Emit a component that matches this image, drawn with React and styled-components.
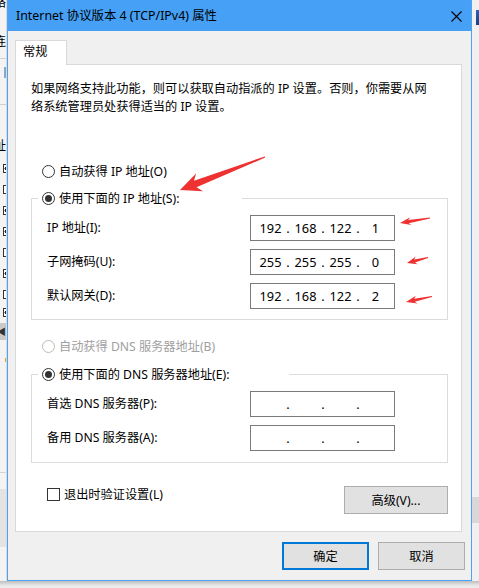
import React from "react";
import styled, { createGlobalStyle } from "styled-components";

const GlobalStyle = createGlobalStyle`
  html, body {
    margin: 0;
    padding: 0;
    background: #f0f0f0;
  }
  body {
    font-family: "Noto Sans", "Noto Sans CJK SC", sans-serif;
    font-size: 12.2px;
    color: #000;
  }
`;

const Page = styled.div`
  position: relative;
  width: 479px;
  height: 588px;
  overflow: hidden;
  display: flex;
  flex-direction: column;
  background: #f0f0f0;
`;

const Stage = styled.div`
  display: flex;
  height: 581px;
`;

/* ---------- background window peeking out at the edges ---------- */
const LeftStrip = styled.div`
  width: 7px;
  box-sizing: border-box;
  border-right: 1px solid #dadada;
  background: #f3f3f3;
  display: flex;
  flex-direction: column;
  overflow: hidden;
`;

const Peek = styled.div`
  height: ${(p) => p.$h}px;
  margin-top: ${(p) => p.$mt || 0}px;
  display: flex;
  justify-content: flex-end;
  align-items: ${(p) => p.$align || "center"};
  overflow: hidden;
  line-height: 14px;
  font-size: 12px;
  white-space: nowrap;
`;

const Rule = styled.div`
  height: 1px;
  margin-top: ${(p) => p.$mt || 0}px;
  background: ${(p) => p.$color || "#cfcfcf"};
`;

const Stub = styled.div`
  width: 4px;
  height: 9px;
  margin: ${(p) => p.$mt}px 0 0 3px;
  box-sizing: border-box;
  border: 1px solid #333;
  border-right: none;
  background: ${(p) => (p.$dot ? "radial-gradient(circle at 75% 50%, #222 1.5px, #fff 2px)" : "#fff")};
`;

const Band = styled.div`
  height: ${(p) => p.$h}px;
  margin-top: ${(p) => p.$mt || 0}px;
  background: ${(p) => p.$color};
  display: flex;
  align-items: center;
  justify-content: flex-end;
  font-size: 9px;
  color: #333;
  overflow: hidden;
`;

const RightStrip = styled.div`
  width: 7px;
  background: #f0f0f0;
  display: flex;
  flex-direction: column;
`;

const WinIcon = styled.div`
  width: 3px;
  height: 15px;
  margin: 10px 0 0 4px;
  background: linear-gradient(#2b5fb8, #1c3f86);
`;

const BottomStrip = styled.div`
  flex: 1;
  background: linear-gradient(#bdbdbd, #e6e6e6 60%, #eeeeee);
`;

/* ---------- dialog ---------- */
const Dialog = styled.div`
  width: 465px;
  box-sizing: border-box;
  border: 1px solid #4ea2f2;
  background: #f0f0f0;
  display: flex;
  flex-direction: column;
`;

const TitleBar = styled.div`
  height: 30px;
  background: #45a0f6;
  display: flex;
  align-items: center;
  justify-content: space-between;
  padding: 0 9px 0 8px;
  margin-top: -1px;
  border-top: 1px solid #45a0f6;
`;

const Title = styled.span`
  font-size: 12.4px;
  line-height: 16px;
  padding-bottom: 1px;
`;

const Body = styled.div`
  flex: 1;
  padding: 9px 6px 0 7px;
  display: flex;
  flex-direction: column;
`;

const TabStrip = styled.div`
  display: flex;
`;

const Tab = styled.div`
  width: 52px;
  height: 25px;
  box-sizing: border-box;
  border: 1px solid #d9d9d9;
  border-bottom: none;
  background: #fff;
  margin-bottom: -1px;
  position: relative;
  z-index: 1;
  padding-left: 7px;
  line-height: 22px;
`;

const Panel = styled.div`
  width: 447px;
  height: 468px;
  box-sizing: border-box;
  border: 1px solid #d9d9d9;
  background: #fff;
  padding: 15px 13px 0 15px;
  display: flex;
  flex-direction: column;
`;

const Intro = styled.p`
  margin: 0;
  line-height: 18px;
  white-space: nowrap;
`;

const RadioRow = styled.label`
  display: flex;
  align-items: center;
  gap: 4px;
  height: 18px;
  margin-top: ${(p) => p.$mt || 0}px;
  padding-left: ${(p) => (p.$inLegend ? 4 : 11)}px;
  color: ${(p) => (p.$disabled ? "#a0a0a0" : "#000")};
  white-space: nowrap;
`;

const RadioDot = styled.span`
  width: 13px;
  height: 13px;
  box-sizing: border-box;
  border-radius: 50%;
  border: 1px solid ${(p) => (p.$disabled ? "#bcbcbc" : "#333")};
  background: #fff;
  display: flex;
  align-items: center;
  justify-content: center;

  &::after {
    content: "";
    width: 7px;
    height: 7px;
    border-radius: 50%;
    background: ${(p) => (p.$checked ? "#333" : "transparent")};
  }
`;

const Group = styled.fieldset`
  margin: ${(p) => p.$mt}px 0 0;
  padding: 8px 0 ${(p) => p.$pb}px;
  border: 1px solid #dcdcdc;
  min-width: 0;
  display: flex;
  flex-direction: column;
  gap: 8px;
`;

const Legend = styled.legend`
  width: ${(p) => p.$w}px;
  box-sizing: border-box;
  margin-left: 6px;
  padding: 0;
  background: #fff;
`;

const FieldRow = styled.div`
  display: flex;
  align-items: center;
  padding-left: 15px;
`;

const FieldLabel = styled.span`
  width: 203px;
  line-height: 18px;
`;

const IpBox = styled.div`
  width: 145px;
  height: 26px;
  box-sizing: border-box;
  border: 1px solid #7a7a7a;
  background: #fff;
  display: flex;
  align-items: center;
  padding-left: 4px;
  font-size: 12.8px;
`;

const Octet = styled.span`
  width: 31px;
  text-align: center;
`;

const Dot = styled.span`
  width: 4px;
  text-align: center;
`;

const BottomRow = styled.div`
  display: flex;
  justify-content: space-between;
  align-items: flex-start;
  margin-top: 22px;
  padding-left: 16px;
`;

const CheckRow = styled.label`
  display: flex;
  align-items: center;
  gap: 4px;
  height: 18px;
`;

const CheckBox = styled.span`
  width: 13px;
  height: 13px;
  box-sizing: border-box;
  border: 1px solid #333;
  background: #fff;
`;

const Button = styled.button`
  width: ${(p) => p.$w}px;
  height: 28px;
  margin-top: ${(p) => p.$mt || 0}px;
  box-sizing: border-box;
  border: ${(p) => (p.$primary ? "2px solid #0078d7" : "1px solid #adadad")};
  background: #e1e1e1;
  font-family: inherit;
  font-size: 12.2px;
  color: #000;
  padding: 0;
`;

const ButtonBar = styled.div`
  display: flex;
  justify-content: flex-end;
  gap: 9px;
  margin-top: 10px;
`;

const Overlay = styled.svg`
  position: absolute;
  inset: 0;
  pointer-events: none;
`;

const CloseIcon = () => (
  <svg width="11" height="11" viewBox="0 0 11 11">
    <path d="M0.5 0.5 L10.5 10.5 M10.5 0.5 L0.5 10.5" stroke="#000" strokeWidth="1.1" />
  </svg>
);

const Radio = ({ checked, disabled, children, mt, inLegend }) => (
  <RadioRow $mt={mt} $disabled={disabled} $inLegend={inLegend}>
    <RadioDot $checked={checked} $disabled={disabled} />
    {children}
  </RadioRow>
);

const IpField = ({ value }) => {
  const parts = value ? value.split(".") : ["", "", "", ""];
  return (
    <IpBox>
      {parts.map((p, i) => (
        <React.Fragment key={i}>
          <Octet>{p}</Octet>
          {i < 3 && <Dot>.</Dot>}
        </React.Fragment>
      ))}
    </IpBox>
  );
};

// tapered screenshot-tool arrow, tip -> tail
function arrowPoints(tip, tail, head, half, shaft, tailHalf) {
  const dx = tail[0] - tip[0];
  const dy = tail[1] - tip[1];
  const len = Math.hypot(dx, dy);
  const ux = dx / len;
  const uy = dy / len;
  const nx = -uy;
  const ny = ux;
  const at = (d, w) => [tip[0] + ux * d + nx * w, tip[1] + uy * d + ny * w];
  return [
    tip,
    at(head, half),
    at(head * 0.78, shaft),
    at(len, tailHalf),
    at(len, -tailHalf),
    at(head * 0.78, -shaft),
    at(head, -half),
  ]
    .map((p) => p.map((v) => v.toFixed(1)).join(","))
    .join(" ");
}

const arrows = [
  arrowPoints([180, 190], [265, 157], 21, 9.5, 3.5, 0.6),
  arrowPoints([400, 223], [430, 218], 11, 4, 1.6, 0.5),
  arrowPoints([407, 263], [428, 257.5], 10, 4, 1.6, 0.5),
  arrowPoints([406, 302], [432, 296.5], 11, 4, 1.6, 0.5),
];

const App = () => {
  return (
    <Page>
      <GlobalStyle />
      <Stage>
        <LeftStrip>
          <Peek $h={10} $align="flex-end">络</Peek>
          <Peek $h={14} $mt={25}>连</Peek>
          <Rule $mt={9} />
          <Band $h={11} $mt={8} $color="linear-gradient(90deg, transparent 4px, #8aa7c9 4px)" />
          <Rule $mt={26} />
          <Peek $h={14} $mt={34}>址</Peek>
          <Stub $mt={11} $dot />
          <Stub $mt={12} />
          <Stub $mt={12} $dot />
          <Stub $mt={12} $dot />
          <Stub $mt={12} />
          <Stub $mt={12} $dot />
          <Stub $mt={12} />
          <Stub $mt={9} $dot />
          <Band $h={17} $mt={6} $color="#c9c9c9">◀</Band>
          <Band $h={4} $mt={18} $color="linear-gradient(90deg, transparent 5px, #e89a2e 5px)" />
          <Rule $mt={110} $color="#d4d4d4" />
          <Band $h={58} $mt={16} $color="#e3e3e3" />
        </LeftStrip>

        <Dialog>
          <TitleBar>
            <Title>Internet 协议版本 4 (TCP/IPv4) 属性</Title>
            <CloseIcon />
          </TitleBar>
          <Body>
            <TabStrip>
              <Tab>常规</Tab>
            </TabStrip>
            <Panel>
              <Intro>
                如果网络支持此功能，则可以获取自动指派的 IP 设置。否则，你需要从网
                <br />
                络系统管理员处获得适当的 IP 设置。
              </Intro>

              <Radio mt={46}>自动获得 IP 地址(O)</Radio>
              <Group $mt={9} $pb={10}>
                <Legend $w={204}>
                  <Radio checked inLegend>使用下面的 IP 地址(S):</Radio>
                </Legend>
                <FieldRow>
                  <FieldLabel>IP 地址(I):</FieldLabel>
                  <IpField value="192.168.122.1" />
                </FieldRow>
                <FieldRow>
                  <FieldLabel>子网掩码(U):</FieldLabel>
                  <IpField value="255.255.255.0" />
                </FieldRow>
                <FieldRow>
                  <FieldLabel>默认网关(D):</FieldLabel>
                  <IpField value="192.168.122.2" />
                </FieldRow>
              </Group>

              <Radio mt={17} disabled>自动获得 DNS 服务器地址(B)</Radio>
              <Group $mt={10} $pb={11}>
                <Legend $w={251}>
                  <Radio checked inLegend>使用下面的 DNS 服务器地址(E):</Radio>
                </Legend>
                <FieldRow>
                  <FieldLabel>首选 DNS 服务器(P):</FieldLabel>
                  <IpField />
                </FieldRow>
                <FieldRow>
                  <FieldLabel>备用 DNS 服务器(A):</FieldLabel>
                  <IpField />
                </FieldRow>
              </Group>

              <BottomRow>
                <CheckRow>
                  <CheckBox />
                  退出时验证设置(L)
                </CheckRow>
                <Button $w={104} $mt={1}>高级(V)...</Button>
              </BottomRow>
            </Panel>
            <ButtonBar>
              <Button $w={87} $primary>确定</Button>
              <Button $w={87}>取消</Button>
            </ButtonBar>
          </Body>
        </Dialog>

        <RightStrip>
          <WinIcon />
          <Band $h={26} $mt={472} $color="#d8d8d8" />
        </RightStrip>
      </Stage>
      <BottomStrip />

      <Overlay width="479" height="588" viewBox="0 0 479 588">
        {arrows.map((pts, i) => (
          <polygon key={i} points={pts} fill="#ee3131" />
        ))}
      </Overlay>
    </Page>
  );
};

export default App;
